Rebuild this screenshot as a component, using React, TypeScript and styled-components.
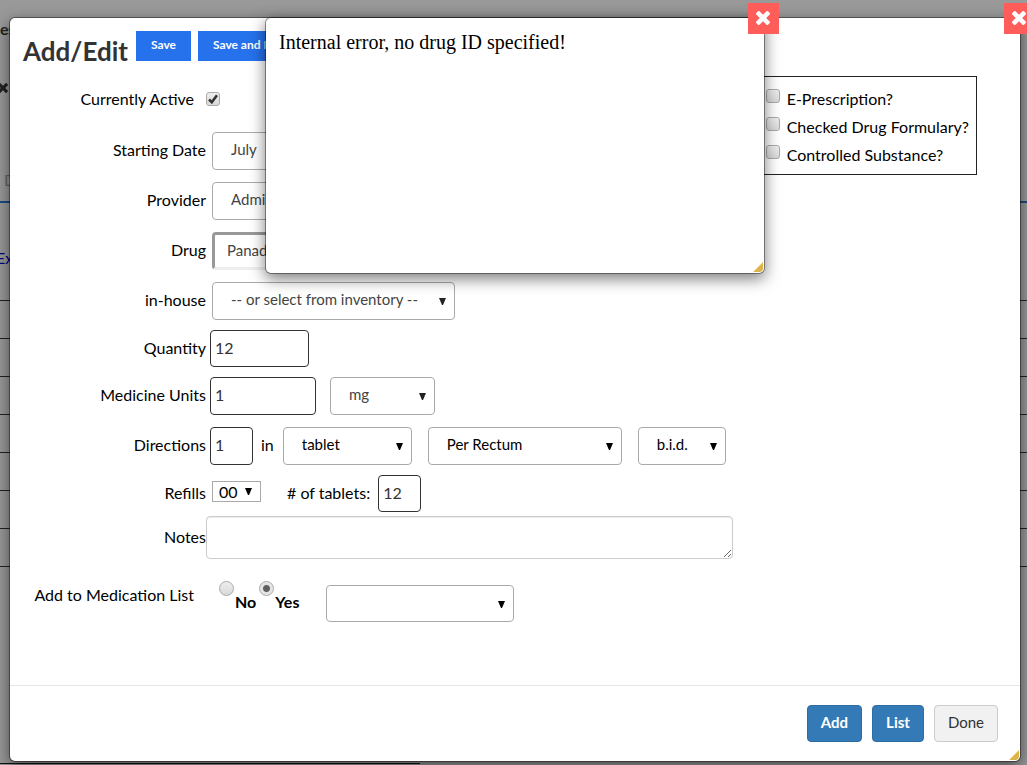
import React from "react";
import styled, { createGlobalStyle } from "styled-components";

const GlobalStyle = createGlobalStyle`
  *, *::before, *::after { box-sizing: border-box; }
  html, body, #root { height: 100%; }
  body {
    margin: 0;
    overflow: hidden;
    background: #999;
    color: #000;
    font: 16px/20px Lato, "Open Sans", sans-serif;
  }
  button, input, select, textarea { font-family: inherit; margin: 0; }
`;

/* ---------- chart page behind the dialogs ---------- */

const Page = styled.div`
  position: relative;
  min-height: 100%;
  overflow: hidden;
`;

const Backdrop = styled.div`
  color: #222;
  padding-top: 19px;
`;

const BackHeading = styled.div`
  height: 58px;
  font-weight: 700;
  font-size: 16px;
`;

const BackClose = styled.div`
  height: 93px;
  margin-left: -2px;
`;

const BackTabs = styled.div`
  height: 33px;
  padding-left: 4px;
  border-bottom: 2px solid #1c4a80;
  color: #666;
`;

const BackLink = styled.a`
  display: block;
  padding: 45px 0 32px;
  margin-left: -4px;
  color: #000080;
  text-decoration: none;
`;

const BackRow = styled.div`
  height: 38px;
  border-top: 1px solid #222;
`;

const BackEnd = styled.div`
  width: 420px;
  height: 160px;
  border-bottom: 1px solid #111;
`;

/* ---------- dialogs ---------- */

const Overlay = styled.div`
  position: absolute;
  inset: 0;
  padding: 17px 6px 3px 9px;
`;

const Dialog = styled.section`
  position: relative;
  background: #fff;
  background-clip: padding-box;
  border: 1px solid rgba(0, 0, 0, 0.4);
  border-radius: 6px;
  box-shadow: 0 5px 15px rgba(0, 0, 0, 0.5);
`;

const ErrorDialog = styled(Dialog)`
  position: absolute;
  top: 17px;
  left: 265px;
  width: 500px;
  height: 257px;
  padding: 12px 13px;
  font: 20px/24px "Liberation Serif", "Times New Roman", serif;
`;

const CloseButton = styled.button`
  position: absolute;
  top: -15px;
  right: -15px;
  width: 31px;
  height: 31px;
  padding: 0 2px 2px 0;
  border: 0;
  display: grid;
  place-items: center;
  background: #ff5d5a;
  color: #fff;
`;

const Grip = styled.svg`
  position: absolute;
  right: 1px;
  bottom: 1px;
`;

const Header = styled.header`
  display: flex;
  align-items: flex-start;
  gap: 7px;
  padding: 13px 13px 0;
  height: 58px;
`;

const Title = styled.h1`
  margin: 0;
  padding: 3px 1px 0 0;
  font-size: 26px;
  line-height: 34px;
  font-weight: 700;
  color: #333;
`;

const SaveButton = styled.button`
  height: 30px;
  padding: 0 15px 4px;
  border: 0;
  background: #2672ec;
  color: #fff;
  font-size: 12px;
  font-weight: 700;
`;

const Body = styled.div`
  display: flex;
  align-items: flex-start;
  justify-content: space-between;
  padding-right: 43px;
  height: 609px;
`;

const Form = styled.form`
  display: flex;
  flex-direction: column;
  flex: 1;
`;

const Row = styled.div<{ $above?: number; $height?: number }>`
  display: flex;
  align-items: center;
  height: ${(p) => p.$height ?? 38}px;
  margin-top: ${(p) => p.$above ?? 12}px;
`;

const Label = styled.label<{ $inset?: boolean }>`
  flex: none;
  width: ${(p) => (p.$inset ? 184 : 196)}px;
  text-align: right;
  padding-bottom: ${(p) => (p.$inset ? 0 : 2)}px;
`;

const Inline = styled.label<{ $gap?: number }>`
  padding: 0 8px 2px ${(p) => p.$gap ?? 8}px;
`;

const TextInput = styled.input<{ $width: number; $left?: number }>`
  width: ${(p) => p.$width}px;
  height: 100%;
  margin-left: ${(p) => p.$left ?? 4}px;
  padding: 0 4px 3px;
  border: 1px solid #333;
  border-radius: 4px;
  background: #fff;
  color: #333;
  font-size: 16px;
`;

const DrugInput = styled.input`
  width: 240px;
  height: 100%;
  margin-left: 6px;
  padding: 0 12px 3px;
  border: 3px solid;
  border-color: #999 #eee #eee #999;
  border-radius: 4px;
  color: #444;
  font-size: 15px;
`;

const Notes = styled.textarea`
  width: 527px;
  height: 43px;
  padding: 6px 12px;
  border: 1px solid #ccc;
  border-radius: 4px;
  box-shadow: inset 0 1px 1px rgba(0, 0, 0, 0.075);
  resize: both;
  font-size: 14px;
`;

const SelectFrame = styled.span<{ $width: number; $left: number; $compact?: boolean }>`
  position: relative;
  display: block;
  flex: none;
  width: ${(p) => p.$width}px;
  height: ${(p) => (p.$compact ? "21px" : "100%")};
  margin-left: ${(p) => p.$left}px;
  margin-bottom: ${(p) => (p.$compact ? 4 : 0)}px;
  svg {
    position: absolute;
    right: 9px;
    top: 50%;
    margin-top: ${(p) => (p.$compact ? -5 : -4)}px;
    pointer-events: none;
  }
`;

const SelectBox = styled.select<{ $compact?: boolean; $dark?: boolean }>`
  appearance: none;
  display: block;
  width: 100%;
  height: 100%;
  padding: ${(p) => (p.$compact ? "0 6px" : "0 18px 4px")};
  border: 1px solid #aaa;
  border-radius: ${(p) => (p.$compact ? 0 : 4)}px;
  background: #fff;
  color: ${(p) => (p.$dark ? "#000" : "#444")};
  font-size: ${(p) => (p.$compact ? 16 : 15)}px;
`;

const Tick = styled.span`
  position: relative;
  flex: none;
  width: 14px;
  height: 14px;
  svg {
    position: absolute;
    left: 2px;
    top: 2px;
    pointer-events: none;
  }
`;

const CheckInput = styled.input`
  appearance: none;
  display: block;
  width: 14px;
  height: 14px;
  border: 1px solid #aaa;
  border-radius: 3px;
  background: linear-gradient(#eee, #d8d8d8);
`;

const RadioInput = styled.input`
  appearance: none;
  flex: none;
  width: 15px;
  height: 15px;
  border: 1px solid #aaa;
  border-radius: 50%;
  background: linear-gradient(#eee, #d8d8d8);
  &:checked {
    background: radial-gradient(circle, #606060 3px, #e4e4e4 4px);
  }
`;

const RadioGroup = styled.div`
  display: flex;
  align-self: flex-start;
  width: 107px;
  margin-left: 25px;
  gap: 3px;
`;

const RadioLabel = styled.label`
  display: flex;
  align-items: flex-start;
  gap: 1px;
  font-weight: 700;
  span { padding-top: 11px; }
`;

const MedListRow = styled(Row)`
  > ${Label} {
    align-self: flex-start;
    padding-top: 4px;
  }
  > ${SelectFrame} {
    align-self: flex-end;
    height: 37px;
  }
`;

const Options = styled.fieldset`
  flex: none;
  margin: 0;
  padding: 8px 7px 5px;
  border: 1px solid #222;
  display: flex;
  flex-direction: column;
`;

const Option = styled.label`
  display: flex;
  align-items: flex-start;
  gap: 7px;
  height: 28px;
  padding-top: 4px;
`;

const Footer = styled.footer`
  display: flex;
  justify-content: flex-end;
  gap: 10px;
  padding: 19px 22px 19px;
  border-top: 1px solid #e5e5e5;
`;

const FooterButton = styled.button<{ $primary?: boolean }>`
  height: 37px;
  padding: 0 13px 4px;
  border: 1px solid ${(p) => (p.$primary ? "#2e6da4" : "#ccc")};
  border-radius: 4px;
  background: ${(p) => (p.$primary ? "#337ab7" : "#f1f1f1")};
  color: ${(p) => (p.$primary ? "#fff" : "#333")};
  font-size: 15px;
  font-weight: ${(p) => (p.$primary ? 700 : 400)};
`;

const Cross = ({ size = 14 }: { size?: number }) => (
  <svg width={size} height={size} viewBox="110 366 1188 1188" fill="currentColor" aria-hidden="true">
    <path d="M1298 1322q0 40-28 68l-136 136q-28 28-68 28t-68-28l-294-294-294 294q-28 28-68 28t-68-28l-136-136q-28-28-28-68t28-68l294-294-294-294q-28-28-28-68t28-68l136-136q28-28 68-28t68 28l294 294 294-294q28-28 68-28t68 28l136 136q28 28 28 68t-28 68l-294 294 294 294q28 28 28 68z" />
  </svg>
);

const ResizeGrip = () => (
  <Grip width="10" height="10" viewBox="0 0 10 10" aria-hidden="true">
    <path d="M0 10 10 0V6Q10 10 6 10Z" fill="#e3b94f" />
    <path d="M3 10 10 3M6 10 10 6" stroke="#c99a2c" strokeWidth="1" strokeDasharray="1 1" />
  </Grip>
);

interface SelectProps {
  id: string;
  text: string;
  width: number;
  left: number;
  compact?: boolean;
  dark?: boolean;
  label?: string;
}

const Select = ({ id, text, width, left, compact, dark, label }: SelectProps) => (
  <SelectFrame $width={width} $left={left} $compact={compact}>
    <SelectBox id={id} aria-label={label} $compact={compact} $dark={dark}>
      <option>{text}</option>
    </SelectBox>
    <svg width="7" height="8" viewBox="0 0 7 8" aria-hidden="true">
      <path d="M0 1H7L4 8H3Z" fill={dark ? "#000" : "#222"} />
    </svg>
  </SelectFrame>
);

const CheckBox = ({ id, checked }: { id: string; checked?: boolean }) => (
  <Tick>
    <CheckInput type="checkbox" id={id} defaultChecked={checked} />
    {checked && (
      <svg width="10" height="10" viewBox="0 0 10 10" aria-hidden="true">
        <path d="M1 5.5 3.8 8.2 9 1.2" fill="none" stroke="#333" strokeWidth="2.6" />
      </svg>
    )}
  </Tick>
);

const historyRows = [1, 2, 3, 4, 5, 6, 7, 8];
const options = ["E-Prescription?", "Checked Drug Formulary?", "Controlled Substance?"];

export default function App() {
  return (
    <>
      <GlobalStyle />
      <Page>
        <Backdrop>
          <BackHeading>es</BackHeading>
          <BackClose><Cross size={10} /></BackClose>
          <BackTabs>D</BackTabs>
          <BackLink href="#">Ex</BackLink>
          {historyRows.map((n) => <BackRow key={n} />)}
          <BackEnd />
        </Backdrop>

        <Overlay>
          <Dialog aria-label="Add/Edit">
            <Header>
              <Title>Add/Edit</Title>
              <SaveButton type="button">Save</SaveButton>
              <SaveButton type="button">Save and List</SaveButton>
            </Header>
            <Body>
              <Form>
                <Row $above={4}>
                  <Label htmlFor="active" $inset>Currently Active</Label>
                  <Inline as="span" $gap={4} />
                  <CheckBox id="active" checked />
                </Row>
                <Row $above={14}>
                  <Label htmlFor="start">Starting Date</Label>
                  <Select id="start" text="July" width={110} left={6} />
                </Row>
                <Row>
                  <Label htmlFor="provider">Provider</Label>
                  <Select id="provider" text="Administrator" width={180} left={6} />
                </Row>
                <Row>
                  <Label htmlFor="drug">Drug</Label>
                  <DrugInput id="drug" defaultValue="Panadol" />
                </Row>
                <Row>
                  <Label htmlFor="inhouse">in-house</Label>
                  <Select id="inhouse" text="-- or select from inventory --" width={243} left={6} />
                </Row>
                <Row $above={10} $height={37}>
                  <Label htmlFor="quantity">Quantity</Label>
                  <TextInput id="quantity" $width={99} defaultValue="12" />
                </Row>
                <Row $above={10}>
                  <Label htmlFor="units">Medicine Units</Label>
                  <TextInput id="units" $width={106} defaultValue="1" />
                  <Select id="unit" label="Unit" text="mg" width={105} left={14} />
                </Row>
                <Row>
                  <Label htmlFor="dose">Directions</Label>
                  <TextInput id="dose" $width={43} defaultValue="1" />
                  <Inline htmlFor="form">in</Inline>
                  <Select id="form" text="tablet" width={129} left={1} dark />
                  <Select id="route" label="Route" text="Per Rectum" width={194} left={16} dark />
                  <Select id="interval" label="Interval" text="b.i.d." width={88} left={16} dark />
                </Row>
                <Row $above={10} $height={37}>
                  <Label htmlFor="refills">Refills</Label>
                  <Select id="refills" text="00" width={49} left={6} compact dark />
                  <Inline htmlFor="tablets" $gap={26}># of tablets:</Inline>
                  <TextInput id="tablets" $width={43} $left={0} defaultValue="12" />
                </Row>
                <Row $above={4} $height={43}>
                  <Label htmlFor="notes">Notes</Label>
                  <Notes id="notes" />
                </Row>
                <MedListRow $above={22} $height={41}>
                  <Label as="span" $inset>Add to Medication List</Label>
                  <RadioGroup role="radiogroup" aria-label="Add to Medication List">
                    <RadioLabel><RadioInput type="radio" name="medlist" /><span>No</span></RadioLabel>
                    <RadioLabel><RadioInput type="radio" name="medlist" defaultChecked /><span>Yes</span></RadioLabel>
                  </RadioGroup>
                  <Select id="list" label="List" text="" width={188} left={0} dark />
                </MedListRow>
              </Form>
              <Options>
                {options.map((text, i) => (
                  <Option key={text} htmlFor={`option${i}`}>
                    <CheckBox id={`option${i}`} />
                    <span>{text}</span>
                  </Option>
                ))}
              </Options>
            </Body>
            <Footer>
              <FooterButton type="button" $primary>Add</FooterButton>
              <FooterButton type="button" $primary>List</FooterButton>
              <FooterButton type="button">Done</FooterButton>
            </Footer>
            <CloseButton type="button" aria-label="Close"><Cross /></CloseButton>
            <ResizeGrip />
          </Dialog>
        </Overlay>

        <ErrorDialog role="alertdialog" aria-label="Error">
          Internal error, no drug ID specified!
          <CloseButton type="button" aria-label="Close error"><Cross /></CloseButton>
          <ResizeGrip />
        </ErrorDialog>
      </Page>
    </>
  );
}
